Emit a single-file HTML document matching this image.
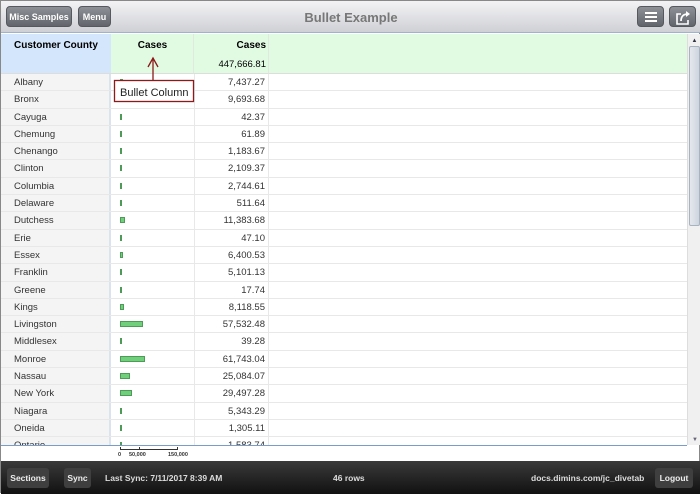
<!DOCTYPE html>
<html><head><meta charset="utf-8"><style>
*{box-sizing:border-box;margin:0;padding:0}
body{width:700px;height:493px;overflow:hidden;font-family:"Liberation Sans",sans-serif;background:#fff;position:relative;border:1px solid #888}
.top{position:absolute;left:0;top:0;width:700px;height:32px;background:linear-gradient(#f3f3f5,#cfd0d5);border-bottom:1px solid #9fb3cc}
.btn{position:absolute;top:5px;height:21px;border-radius:4px;background:linear-gradient(#8d9096,#62656b);color:#fff;font-size:9px;font-weight:bold;line-height:21px;text-align:center;border:1px solid #55585d}
.title{position:absolute;left:0;width:700px;top:9px;text-align:center;font-size:13px;font-weight:bold;color:#777}
.hdr{position:absolute;top:33px;height:40px;border-bottom:1px solid #ddd;font-size:10px;font-weight:bold}
.rows{position:absolute;left:0;top:73px;width:686px;height:371px;overflow:hidden}
.r{height:17.3px;border-bottom:1px solid #e8e8e8;position:relative;font-size:9.5px;color:#333}
.r .c{position:absolute;left:0;width:110px;height:100%;background:#f4f4f4;border-right:2px solid #dbe3ef;padding-left:13px;line-height:18px}
.r .b{position:absolute;left:119px;top:5px;height:6px;background:#6fcf7a;border:1px solid #4e9a57}
.r .v{position:absolute;left:193px;width:75px;text-align:right;padding-right:3px;line-height:18px;border-left:1px solid #e8e8e8;border-right:1px solid #e8e8e8;height:100%}
.foot{position:absolute;left:0;top:460px;width:700px;height:33px;background:linear-gradient(#3a3a3a,#111);color:#ddd;font-size:8.5px;font-weight:bold}
.fb{position:absolute;top:7px;height:20px;line-height:20px;background:#3f3f3f;border-radius:3px;color:#eee;text-align:center;font-size:8.5px}
</style></head><body>
<div class="top">
<div class="btn" style="left:5px;width:66px">Misc Samples</div>
<div class="btn" style="left:77px;width:33px">Menu</div>
<div class="title">Bullet Example</div>
<div class="btn" style="left:636px;width:27px"><svg width="12" height="10" style="margin-top:5px"><rect x="0" y="0" width="12" height="2" fill="#fff"/><rect x="0" y="4" width="12" height="2" fill="#fff"/><rect x="0" y="8" width="12" height="2" fill="#fff"/></svg></div>
<div class="btn" style="left:668px;width:27px"><svg width="16" height="15" style="margin-top:3px"><path d="M6 4H2v10h11v-4" fill="none" stroke="#fff" stroke-width="1.6"/><path d="M6 11c0-5 3-7 7-7" fill="none" stroke="#fff" stroke-width="1.8"/><path d="M11 1l4 3-4 3z" fill="#fff"/></svg></div>
</div>
<div class="hdr" style="left:0;width:110px;background:#d4e6fb;padding:6px 0 0 13px">Customer County</div>
<div class="hdr" style="left:110px;width:576px;background:#e1fbe3"></div>
<div class="hdr" style="left:111px;width:82px;text-align:center;padding-top:6px;border-right:1px solid #e0e8e0">Cases</div>
<div class="hdr" style="left:193px;width:75px;text-align:right;padding:6px 2px 0 0;border-right:1px solid #e0e8e0">Cases<div style="font-weight:normal;font-size:9.5px;margin-top:8px">447,666.81</div></div>
<div class="rows">
<div class="r"><div class="c">Albany</div><div class="b" style="width:3px"></div><div class="v">7,437.27</div></div>
<div class="r"><div class="c">Bronx</div><div class="b" style="width:4px"></div><div class="v">9,693.68</div></div>
<div class="r"><div class="c">Cayuga</div><div class="b" style="width:2px"></div><div class="v">42.37</div></div>
<div class="r"><div class="c">Chemung</div><div class="b" style="width:2px"></div><div class="v">61.89</div></div>
<div class="r"><div class="c">Chenango</div><div class="b" style="width:2px"></div><div class="v">1,183.67</div></div>
<div class="r"><div class="c">Clinton</div><div class="b" style="width:2px"></div><div class="v">2,109.37</div></div>
<div class="r"><div class="c">Columbia</div><div class="b" style="width:2px"></div><div class="v">2,744.61</div></div>
<div class="r"><div class="c">Delaware</div><div class="b" style="width:2px"></div><div class="v">511.64</div></div>
<div class="r"><div class="c">Dutchess</div><div class="b" style="width:5px"></div><div class="v">11,383.68</div></div>
<div class="r"><div class="c">Erie</div><div class="b" style="width:2px"></div><div class="v">47.10</div></div>
<div class="r"><div class="c">Essex</div><div class="b" style="width:3px"></div><div class="v">6,400.53</div></div>
<div class="r"><div class="c">Franklin</div><div class="b" style="width:2px"></div><div class="v">5,101.13</div></div>
<div class="r"><div class="c">Greene</div><div class="b" style="width:2px"></div><div class="v">17.74</div></div>
<div class="r"><div class="c">Kings</div><div class="b" style="width:4px"></div><div class="v">8,118.55</div></div>
<div class="r"><div class="c">Livingston</div><div class="b" style="width:23px"></div><div class="v">57,532.48</div></div>
<div class="r"><div class="c">Middlesex</div><div class="b" style="width:2px"></div><div class="v">39.28</div></div>
<div class="r"><div class="c">Monroe</div><div class="b" style="width:25px"></div><div class="v">61,743.04</div></div>
<div class="r"><div class="c">Nassau</div><div class="b" style="width:10px"></div><div class="v">25,084.07</div></div>
<div class="r"><div class="c">New York</div><div class="b" style="width:12px"></div><div class="v">29,497.28</div></div>
<div class="r"><div class="c">Niagara</div><div class="b" style="width:2px"></div><div class="v">5,343.29</div></div>
<div class="r"><div class="c">Oneida</div><div class="b" style="width:2px"></div><div class="v">1,305.11</div></div>
<div class="r"><div class="c">Ontario</div><div class="b" style="width:2px"></div><div class="v">1,583.74</div></div>
</div>
<div style="position:absolute;left:0;top:444px;width:686px;height:16px;border-top:1px solid #7a9cc8;background:#fff"></div>
<div style="position:absolute;left:119px;top:446px;width:58px;height:3px;border:1px solid #333;border-top:none"></div>
<div style="position:absolute;left:138px;top:446px;width:1px;height:3px;background:#333"></div>
<div style="position:absolute;left:117px;top:451px;font-size:5.5px;font-weight:bold;color:#333;width:80px"><span>0</span><span style="position:absolute;left:11px">50,000</span><span style="position:absolute;left:50px">150,000</span></div>
<svg style="position:absolute;left:110px;top:54px" width="90" height="50">
<line x1="42" y1="3" x2="42" y2="25" stroke="#8b1a1a" stroke-width="1.3"/>
<polyline points="37,12 42,3 47,12" fill="none" stroke="#8b1a1a" stroke-width="1.3"/>
<rect x="3.5" y="25.5" width="79" height="21" fill="#fff" stroke="#8b1a1a" stroke-width="1.3"/>
<text x="9" y="41" font-family="Liberation Sans, sans-serif" font-size="11" fill="#222">Bullet Column</text>
</svg>
<div style="position:absolute;left:686px;top:33px;width:14px;height:411px;background:#f0f0f0;border-left:1px solid #ddd">
<div style="text-align:center;font-size:6px;color:#334;margin-top:4px">&#9650;</div>
<div style="position:absolute;left:1px;top:12px;width:11px;height:180px;background:linear-gradient(90deg,#e4e8ee,#cfd5dd);border:1px solid #a9b2bf;border-radius:2px"></div>
<div style="position:absolute;left:0;bottom:2px;width:14px;text-align:center;font-size:6px;color:#667">&#9660;</div>
</div>
<div class="foot">
<div class="fb" style="left:6px;width:42px">Sections</div>
<div class="fb" style="left:63px;width:27px">Sync</div>
<div style="position:absolute;left:104px;top:12px">Last Sync: 7/11/2017 8:39 AM</div>
<div style="position:absolute;left:332px;top:12px">46 rows</div>
<div style="position:absolute;left:530px;top:12px">docs.dimins.com/jc_divetab</div>
<div class="fb" style="left:654px;width:38px">Logout</div>
</div>
</body></html>
